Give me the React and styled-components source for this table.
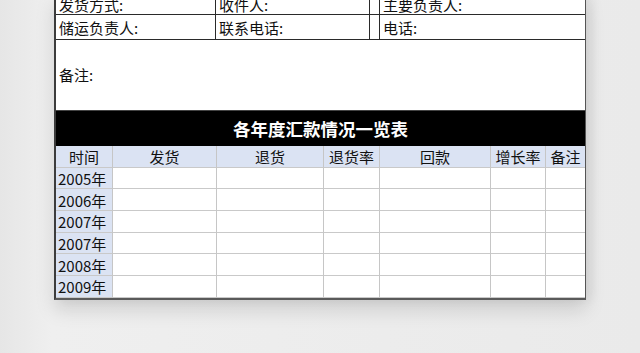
import styled, { createGlobalStyle } from "styled-components";

const Global = createGlobalStyle`
  html, body {
    margin: 0;
    padding: 0;
    background: #ececec;
    overflow: hidden;
  }
  body {
    font-family: "Noto Sans CJK SC", "Noto Sans", sans-serif;
    color: #111;
  }
`;

const Page = styled.div`
  width: 640px;
  height: 353px;
  background: linear-gradient(90deg, #e6e6e6 0%, #efefef 8%, #ececec 60%, #eaeaea 100%);
  overflow: hidden;
  padding-left: 54px;
  box-sizing: border-box;
`;

const Sheet = styled.div`
  width: 532px;
  margin-top: -7px;
  background: #fff;
  border-left: 2px solid #3c3c3c;
  border-right: 1px solid #555;
  border-bottom: 2px solid #5a5a5a;
  box-sizing: border-box;
  box-shadow: 0 10px 18px rgba(0, 0, 0, 0.13), 6px 0 10px rgba(0, 0, 0, 0.05);
`;

const Info = styled.div`
  display: grid;
  grid-template-columns: 160px 154px 10px 1fr;
  grid-template-rows: 22px 25px;
`;

const InfoCell = styled.div`
  display: flex;
  align-items: center;
  padding-left: 3px;
  padding-top: 1px;
  font-size: 15px;
  line-height: 1;
  border-bottom: 1.5px solid #2a2a2a;
  border-right: ${(p) => (p.last ? "none" : "1.5px solid #2a2a2a")};
  white-space: nowrap;
  overflow: hidden;
`;

const Remark = styled.div`
  height: 70px;
  display: flex;
  align-items: center;
  padding-left: 3px;
  padding-bottom: 1px;
  box-sizing: border-box;
  font-size: 15px;
`;

const Title = styled.div`
  height: 36px;
  background: #000;
  color: #fff;
  display: flex;
  align-items: center;
  justify-content: center;
  font-size: 17.5px;
  font-weight: 700;
  border-top: 1.5px solid #444;
  box-sizing: border-box;
`;

const Table = styled.div`
  display: grid;
  grid-template-columns: 57px 104px 107px 56px 111px 55px 1fr;
  grid-auto-rows: 21.7px;
`;

const Cell = styled.div`
  display: flex;
  align-items: center;
  justify-content: ${(p) => (p.head ? "center" : "flex-start")};
  padding-left: ${(p) => (p.head ? "0" : "2px")};
  padding-top: 1px;
  font-size: 15px;
  line-height: 1;
  background: ${(p) => (p.tint ? "#dbe3f3" : "#fff")};
  border-right: ${(p) => (p.last ? "none" : "1px solid #c6c6c6")};
  border-bottom: 1px solid #c9c9c9;
  box-sizing: border-box;
  white-space: nowrap;
  overflow: hidden;
`;

const infoRows = [
  ["发货方式:", "收件人:", "", "主要负责人:"],
  ["储运负责人:", "联系电话:", "", "电话:"],
];

const heads = ["时间", "发货", "退货", "退货率", "回款", "增长率", "备注"];
const years = ["2005年", "2006年", "2007年", "2007年", "2008年", "2009年"];

export default function App() {
  return (
    <>
      <Global />
      <Page>
        <Sheet>
          <Info>
            {infoRows.map((row, r) =>
              row.map((text, i) => (
                <InfoCell key={`${r}-${i}`} last={i === row.length - 1}>
                  {text}
                </InfoCell>
              ))
            )}
          </Info>
          <Remark>备注:</Remark>
          <Title>各年度汇款情况一览表</Title>
          <Table>
            {heads.map((h, i) => (
              <Cell key={h} head tint last={i === heads.length - 1}>
                {h}
              </Cell>
            ))}
            {years.map((y, r) =>
              heads.map((_, i) => (
                <Cell
                  key={`${r}-${i}`}
                  tint={i === 0}
                  last={i === heads.length - 1}
                >
                  {i === 0 ? y : ""}
                </Cell>
              ))
            )}
          </Table>
        </Sheet>
      </Page>
    </>
  );
}
